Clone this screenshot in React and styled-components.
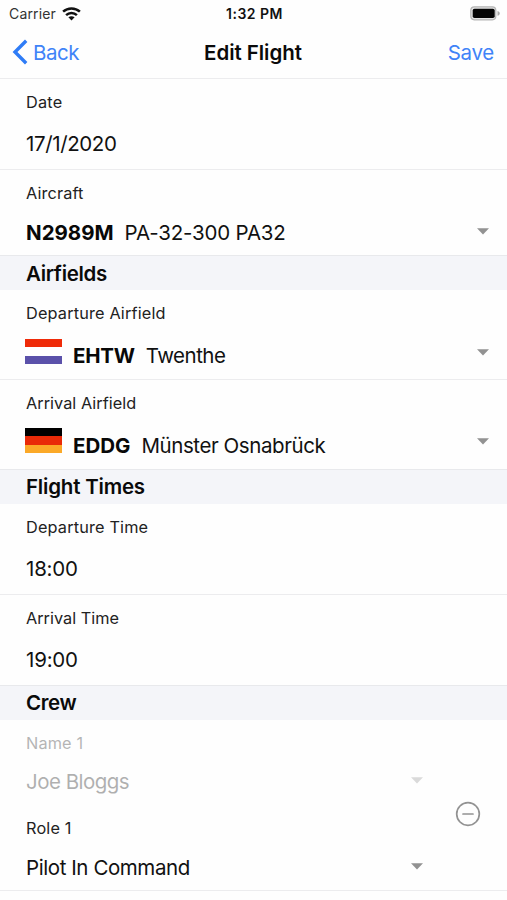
import React from "react";
import styled, { createGlobalStyle } from "styled-components";

const GlobalStyle = createGlobalStyle`
  * { box-sizing: border-box; }
  body {
    margin: 0;
    background: #fefefe;
    color: #111;
    font-family: Inter, "Liberation Sans", sans-serif;
  }
`;

const Screen = styled.main`
  display: flex;
  flex-direction: column;
  width: 507px;
  height: 900px;
  overflow: hidden;
`;

const StatusBar = styled.div`
  display: grid;
  grid-template-columns: 1fr auto 1fr;
  align-items: center;
  height: 27px;
  padding: 0 7px 0 9px;
  font-size: 14px;
  line-height: 20px;
`;

const Carrier = styled.div`
  display: flex;
  align-items: center;
  gap: 6px;
  letter-spacing: 0.15px;
  color: #333;
`;

const Clock = styled.div`
  font-weight: 600;
  letter-spacing: 0.5px;
`;

const Battery = styled.svg`
  justify-self: end;
`;

const NavBar = styled.header`
  display: grid;
  grid-template-columns: 1fr auto 1fr;
  align-items: center;
  height: 52px;
  padding: 1px 13px 0 12px;
  border-bottom: 1px solid #ececee;
  font-size: 20.5px;
  line-height: 24px;
`;

const NavButton = styled.button`
  display: flex;
  align-items: center;
  gap: 5px;
  padding: 0;
  border: 0;
  background: none;
  color: #3f83f8;
  font: inherit;
  letter-spacing: ${(p) => p.$spacing || 0}px;
  justify-self: ${(p) => (p.$end ? "end" : "start")};
`;

const BackIcon = styled.svg`
  margin-bottom: 2px;
`;

const Title = styled.h1`
  margin: 0;
  font-size: 20.5px;
  font-weight: 600;
  letter-spacing: -0.05px;
  color: #0a0a0a;
`;

const SectionTitle = styled.h2`
  height: 35px;
  margin: 0;
  padding: ${(p) => p.$top || 5}px 26px 0;
  border-top: 1px solid #e8e9ec;
  background: #f4f5f9;
  color: #0a0a0a;
  font-size: 20.5px;
  font-weight: 600;
  line-height: 24px;
  letter-spacing: ${(p) => p.$spacing || 0}px;
`;

const Row = styled.div`
  height: ${(p) => p.$height}px;
  padding: 13px 18px 0 26px;
  border-bottom: ${(p) => (p.$divided ? "1px solid #ececee" : "0")};
`;

const Field = styled.div`
  display: flex;
  flex-direction: column;
  gap: ${(p) => p.$gap}px;
  opacity: ${(p) => (p.$disabled ? 0.33 : 1)};
`;

const Label = styled.div`
  font-size: 16.3px;
  line-height: 20px;
  letter-spacing: ${(p) => p.$spacing || 0}px;
  color: #222;
`;

const Value = styled.div`
  display: flex;
  align-items: center;
  height: 24px;
  font-size: 20.5px;
  line-height: 24px;
  letter-spacing: ${(p) => p.$spacing || 0}px;
  white-space: nowrap;
`;

const Code = styled.strong`
  margin-right: 11px;
  font-weight: 700;
  letter-spacing: ${(p) => p.$spacing || 0}px;
  color: #080808;
`;

const Caret = styled.svg`
  flex: none;
  margin: 0 0 ${(p) => p.$lift}px auto;
`;

const Flag = styled.span`
  width: 37px;
  height: 25px;
  margin: 0 11px ${(p) => p.$lift}px -1px;
  background: linear-gradient(
    ${(p) => p.$bands[0]} 0 33.3%,
    ${(p) => p.$bands[1]} 33.3% 66.6%,
    ${(p) => p.$bands[2]} 66.6%
  );
`;

const CrewRow = styled.div`
  display: grid;
  grid-template-columns: 397px auto;
  align-items: center;
  height: 171px;
  padding: 0 26px;
  border-bottom: 1px solid #ececee;
`;

const CrewFields = styled.div`
  display: flex;
  flex-direction: column;
  align-self: start;
  gap: 24px;
  padding-top: 13px;
`;

const RemoveButton = styled.button`
  display: flex;
  justify-self: end;
  padding: 0;
  margin-top: 18px;
  border: 0;
  background: none;
`;

const Arrow = ({ lift = 3 }) => (
  <Caret $lift={lift} width="12" height="7" viewBox="0 0 12 7" aria-hidden="true">
    <path d="M0 .3H12L6 6.5Z" fill="#929292" />
  </Caret>
);

const WifiIcon = () => (
  <svg width="19" height="14" viewBox="0 0 19 14" aria-hidden="true">
    <g fill="none" stroke="#111" strokeWidth="2.5">
      <path d="M1.1 4.7C5.8.3 13.2.3 17.9 4.7" />
      <path d="M4.1 8.1C7.1 5.2 11.9 5.2 14.9 8.1" />
    </g>
    <path d="M6.4 10.3C8.1 8.8 10.9 8.8 12.6 10.3L9.5 13.4Z" fill="#111" />
  </svg>
);

export default function App() {
  return (
    <>
      <GlobalStyle />
      <Screen>
        <StatusBar>
          <Carrier>
            Carrier
            <WifiIcon />
          </Carrier>
          <Clock>1:32 PM</Clock>
          <Battery width="30" height="15" viewBox="0 0 30 15" aria-hidden="true">
            <rect x=".8" y=".8" width="25" height="13" rx="3.5" fill="#e4e4e4" stroke="#b5b5b5" strokeWidth="1.2" />
            <rect x="2.7" y="2.7" width="22" height="9.3" rx="1.8" fill="#050505" />
            <path d="M27.5 5C30.5 6 30.5 8.8 27.5 9.8Z" fill="#aaa" />
          </Battery>
        </StatusBar>

        <NavBar>
          <NavButton $spacing={-0.5}>
            <BackIcon width="16" height="26" viewBox="0 0 16 26" aria-hidden="true">
              <path d="M14.2 1.8L3 13L14.2 24.2" fill="none" stroke="#2f7cf6" strokeWidth="3.4" />
            </BackIcon>
            Back
          </NavButton>
          <Title>Edit Flight</Title>
          <NavButton $end $spacing={-0.3}>Save</NavButton>
        </NavBar>

        <Row $height={91} $divided>
          <Field $gap={20}>
            <Label $spacing={0.2}>Date</Label>
            <Value $spacing={-0.38}>17/1/2020</Value>
          </Field>
        </Row>
        <Row $height={85}>
          <Field $gap={18}>
            <Label $spacing={0.12}>Aircraft</Label>
            <Value $spacing={-0.2}><Code>N2989M</Code>PA-32-300 PA32<Arrow /></Value>
          </Field>
        </Row>

        <SectionTitle $top={6} $spacing={-0.33}>Airfields</SectionTitle>
        <Row $height={90} $divided>
          <Field $gap={21}>
            <Label $spacing={0.16}>Departure Airfield</Label>
            <Value $spacing={-0.5}>
              <Flag $lift={10} $bands={["#ef2b09", "#fff", "#5b51aa"]} />
              <Code $spacing={-0.25}>EHTW</Code>Twenthe<Arrow lift={7} />
            </Value>
          </Field>
        </Row>
        <Row $height={89}>
          <Field $gap={21}>
            <Label $spacing={0.03}>Arrival Airfield</Label>
            <Value $spacing={-0.42}>
              <Flag $lift={12} $bands={["#000", "#e92a08", "#fba928"]} />
              <Code>EDDG</Code>Münster Osnabrück<Arrow lift={9} />
            </Value>
          </Field>
        </Row>

        <SectionTitle $spacing={-0.2}>Flight Times</SectionTitle>
        <Row $height={91} $divided>
          <Field $gap={20}>
            <Label $spacing={0.16}>Departure Time</Label>
            <Value $spacing={-0.2}>18:00</Value>
          </Field>
        </Row>
        <Row $height={90}>
          <Field $gap={20}>
            <Label>Arrival Time</Label>
            <Value $spacing={-0.2}>19:00</Value>
          </Field>
        </Row>

        <SectionTitle $spacing={-0.35}>Crew</SectionTitle>
        <CrewRow>
          <CrewFields>
            <Field $gap={17} $disabled>
              <Label $spacing={0.15}>Name 1</Label>
              <Value $spacing={-0.52}>Joe Bloggs<Arrow /></Value>
            </Field>
            <Field $gap={18}>
              <Label $spacing={0.15}>Role 1</Label>
              <Value $spacing={-0.42}>Pilot In Command<Arrow /></Value>
            </Field>
          </CrewFields>
          <RemoveButton aria-label="Remove crew member">
            <svg width="26" height="26" viewBox="0 0 26 26" aria-hidden="true">
              <circle cx="13" cy="13" r="11.3" fill="none" stroke="#929292" strokeWidth="1.7" />
              <path d="M8 13H18" stroke="#929292" strokeWidth="1.7" strokeLinecap="round" />
            </svg>
          </RemoveButton>
        </CrewRow>
      </Screen>
    </>
  );
}
